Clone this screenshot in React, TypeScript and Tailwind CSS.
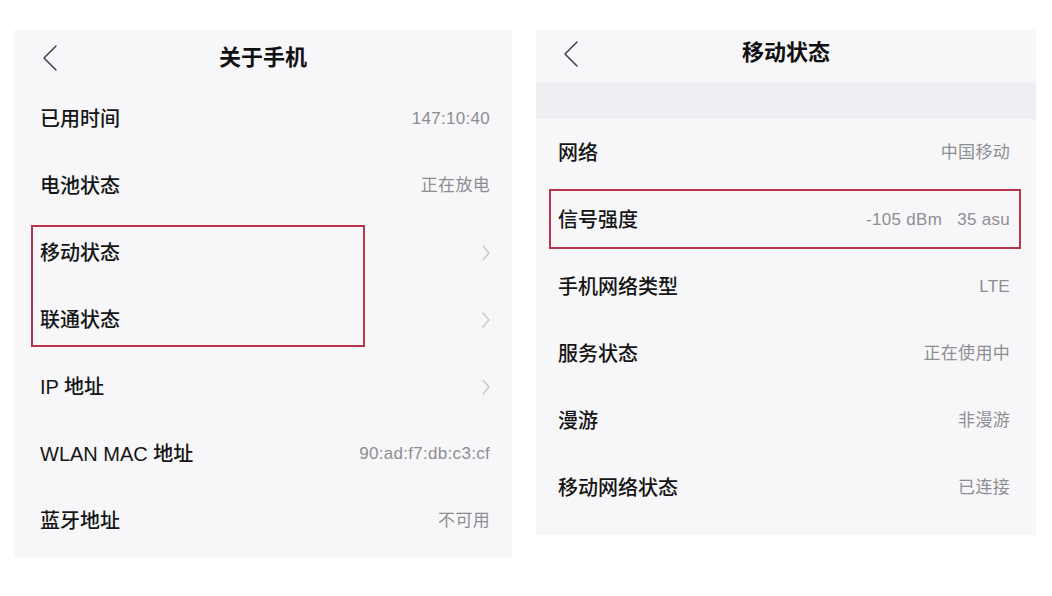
import React from 'react';

type Row = { label: string; value?: string; arrow?: boolean };

const ABOUT: Row[] = [
  { label: '已用时间', value: '147:10:40' },
  { label: '电池状态', value: '正在放电' },
  { label: '移动状态', arrow: true },
  { label: '联通状态', arrow: true },
  { label: 'IP 地址', arrow: true },
  { label: 'WLAN MAC 地址', value: '90:ad:f7:db:c3:cf' },
  { label: '蓝牙地址', value: '不可用' },
];

const MOBILE: Row[] = [
  { label: '网络', value: '中国移动' },
  { label: '信号强度', value: '-105 dBm   35 asu' },
  { label: '手机网络类型', value: 'LTE' },
  { label: '服务状态', value: '正在使用中' },
  { label: '漫游', value: '非漫游' },
  { label: '移动网络状态', value: '已连接' },
];

const font = { fontFamily: '"Liberation Sans", "Noto Sans CJK SC", sans-serif' };

const Back = () => (
  <svg width="16" height="28" viewBox="0 0 16 28" fill="none">
    <path d="M14 2 L2 14 L14 26" stroke="#3a4450" strokeWidth="1.5" strokeLinecap="round" strokeLinejoin="round" />
  </svg>
);

const Chevron = () => (
  <svg width="8" height="16" viewBox="0 0 8 16" fill="none">
    <path d="M1 1 L7 8 L1 15" stroke="#c8c8cc" strokeWidth="1.3" strokeLinecap="round" strokeLinejoin="round" />
  </svg>
);

const ListRow = ({ row, pl, pr }: { row: Row; pl: string; pr: string }) => (
  <div className={`flex h-[67px] items-center justify-between ${pl} ${pr}`}>
    <span className="text-[20px] font-medium text-[#151515]">{row.label}</span>
    {row.arrow ? (
      <Chevron />
    ) : (
      <span className="whitespace-pre text-[17px] tracking-[0.3px] text-[#8e8e92]">{row.value}</span>
    )}
  </div>
);

const App: React.FC = () => {
  return (
    <div className="flex h-[596px] w-[1052px] items-start bg-white" style={font}>
      {/* 关于手机 */}
      <div className="ml-[14px] mt-[30px] flex h-[528px] w-[498px] flex-col bg-[#f7f7f9]">
        <div className="relative flex h-[55px] items-center justify-center">
          <div className="absolute left-[28px] top-[14px]">
            <Back />
          </div>
          <span className="text-[22px] font-bold text-[#111]">关于手机</span>
        </div>
        <ListRow row={ABOUT[0]} pl="pl-[26px]" pr="pr-[22px]" />
        <ListRow row={ABOUT[1]} pl="pl-[26px]" pr="pr-[22px]" />
        <div className="relative">
          <ListRow row={ABOUT[2]} pl="pl-[26px]" pr="pr-[22px]" />
          <ListRow row={ABOUT[3]} pl="pl-[26px]" pr="pr-[22px]" />
          <div className="pointer-events-none absolute left-[17px] top-[6px] h-[122px] w-[334px] border-2 border-[#b8344a]" />
        </div>
        {ABOUT.slice(4).map((r) => (
          <ListRow key={r.label} row={r} pl="pl-[26px]" pr="pr-[22px]" />
        ))}
      </div>

      {/* 移动状态 */}
      <div className="ml-[24px] mt-[30px] flex h-[505px] w-[500px] flex-col bg-[#f7f7f9]">
        <div className="relative flex h-[52px] items-center justify-center pb-[8px]">
          <div className="absolute left-[27px] top-[10px]">
            <Back />
          </div>
          <span className="text-[22px] font-bold text-[#111]">移动状态</span>
        </div>
        <div className="h-[37px] bg-[#efeff3]" />
        <ListRow row={MOBILE[0]} pl="pl-[22px]" pr="pr-[26px]" />
        <div className="relative">
          <ListRow row={MOBILE[1]} pl="pl-[22px]" pr="pr-[26px]" />
          <div className="pointer-events-none absolute left-[13px] top-[3px] h-[60px] w-[472px] border-2 border-[#b8344a]" />
        </div>
        {MOBILE.slice(2).map((r) => (
          <ListRow key={r.label} row={r} pl="pl-[22px]" pr="pr-[26px]" />
        ))}
      </div>
    </div>
  );
};

export default App;
